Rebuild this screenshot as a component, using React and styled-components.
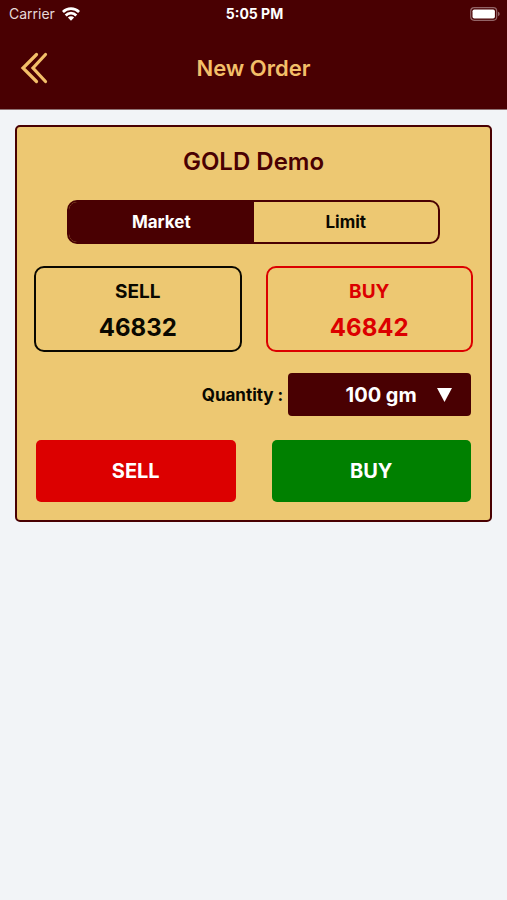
import React, { useState } from 'react';
import styled, { createGlobalStyle } from 'styled-components';

const maroon = '#490002';
const gold = '#edc872';
const red = '#dc0000';

const quantities = ['100 gm', '500 gm', '1 kg'];

function App() {
  const [orderType, setOrderType] = useState('Market');
  const [quantity, setQuantity] = useState('100 gm');

  return (
    <>
      <GlobalStyle />
      <Header>
        <StatusBar>
          <Carrier>
            Carrier
            <WifiIcon />
          </Carrier>
          <Clock>5:05 PM</Clock>
          <Battery>
            <BatteryIcon />
          </Battery>
        </StatusBar>
        <NavBar>
          <BackButton type="button" aria-label="Back">
            <BackIcon />
          </BackButton>
          <Title>New Order</Title>
        </NavBar>
      </Header>
      <Card>
        <Symbol>GOLD Demo</Symbol>
        <Segments>
          {['Market', 'Limit'].map(type => (
            <Segment
              key={type}
              type="button"
              aria-pressed={orderType === type}
              $active={orderType === type}
              onClick={() => setOrderType(type)}
            >
              {type}
            </Segment>
          ))}
        </Segments>
        <Prices>
          <PriceBox $color="#0a0800">
            <PriceLabel>SELL</PriceLabel>
            <Price>46832</Price>
          </PriceBox>
          <PriceBox $color={red}>
            <PriceLabel>BUY</PriceLabel>
            <Price>46842</Price>
          </PriceBox>
        </Prices>
        <QuantityRow>
          <QuantityLabel htmlFor="quantity">Quantity :</QuantityLabel>
          <SelectHolder>
            <Select id="quantity" value={quantity} onChange={e => setQuantity(e.target.value)}>
              {quantities.map(q => <option key={q}>{q}</option>)}
            </Select>
            <Arrow viewBox="0 0 15 14" aria-hidden="true">
              <path d="M0 0h15L7.500 14z" fill="#fff" />
            </Arrow>
          </SelectHolder>
        </QuantityRow>
        <Actions>
          <ActionButton type="button" $color={red}>SELL</ActionButton>
          <ActionButton type="button" $color="#008000">BUY</ActionButton>
        </Actions>
      </Card>
    </>
  );
}

export default App;

const WifiIcon = () => (
  <svg width="18" height="14" viewBox="0 0 18 14" aria-hidden="true">
    <g fill="none" stroke="#fff" strokeWidth="2.800">
      <path d="M0.900 5a11.600 11.600 0 0 1 16.200 0" />
      <path d="M3.700 8.400a7.500 7.500 0 0 1 10.600 0" />
    </g>
    <path d="M5.900 10.500a4.400 4.400 0 0 1 6.200 0L9 13.800z" fill="#fff" />
  </svg>
);

const BatteryIcon = () => (
  <svg width="30" height="14" viewBox="0 0 30 14" aria-hidden="true">
    <rect x="0.700" y="0.700" width="26" height="12.600" rx="3.500" fill="none" stroke="#936467" strokeWidth="1.200" />
    <rect x="2.500" y="2.500" width="22.400" height="9" rx="1.800" fill="#fff" />
    <path d="M28 4.800v4.400c1-.3 1.700-1.200 1.700-2.200S29 5.100 28 4.800z" fill="#936467" />
  </svg>
);

const BackIcon = () => (
  <svg width="28" height="32" viewBox="0 0 28 32" aria-hidden="true">
    <g fill="none" stroke="#f3bf69" strokeWidth="3.200" strokeLinecap="round" strokeLinejoin="miter">
      <path d="M16.500 2.500L3 16L16.500 29.500" />
      <path d="M25.500 2.500L13 16L25.500 29.500" />
    </g>
  </svg>
);

const GlobalStyle = createGlobalStyle`
  * {
    box-sizing: border-box;
  }
  body {
    margin: 0;
    background: #f2f4f7;
    font-family: Inter, "Liberation Sans", sans-serif;
  }
  button, select {
    font-family: inherit;
    cursor: pointer;
  }
`;

const Header = styled.header`
  background: ${maroon};
  border-bottom: 1px solid #8f7273;
`;

const StatusBar = styled.div`
  display: grid;
  grid-template-columns: 1fr auto 1fr;
  align-items: center;
  height: 27px;
  padding: 0 7px 0 9px;
  color: #fff;
  font-size: 14px;
`;

const Carrier = styled.div`
  display: flex;
  align-items: center;
  gap: 7px;
  color: #e6d9d9;
`;

const Clock = styled.div`
  font-weight: 700;
`;

const Battery = styled.div`
  display: flex;
  justify-content: flex-end;
`;

const NavBar = styled.div`
  display: grid;
  grid-template-columns: 1fr auto 1fr;
  align-items: center;
  height: 82px;
  padding: 0 20px;
`;

const BackButton = styled.button`
  display: flex;
  justify-self: start;
  padding: 0;
  border: none;
  background: none;
`;

const Title = styled.h1`
  margin: 0;
  color: #f3bf69;
  font-size: 22px;
  font-weight: 600;
`;

const Card = styled.main`
  margin: 15px;
  padding: 21px 17px 18px;
  border: 2px solid ${maroon};
  border-radius: 5px;
  background: ${gold};
`;

const Symbol = styled.h2`
  margin: 0;
  color: ${maroon};
  font-size: 24px;
  font-weight: 600;
  line-height: 28px;
  text-align: center;
`;

const Segments = styled.div`
  display: flex;
  height: 44px;
  margin: 24px 33px 22px;
  border: 2px solid ${maroon};
  border-radius: 10px;
  overflow: hidden;
`;

const Segment = styled.button`
  flex: 1;
  padding: 0 0 1px;
  border: none;
  background: ${props => props.$active ? maroon : 'transparent'};
  color: ${props => props.$active ? '#fff' : '#0a0800'};
  font-size: 17px;
  font-weight: 700;
`;

const Prices = styled.div`
  display: grid;
  grid-template-columns: 1fr 1fr;
  gap: 24px;
`;

const PriceBox = styled.div`
  padding: 8px 0 2px;
  border: 2px solid ${props => props.$color};
  border-radius: 10px;
  color: ${props => props.$color};
  text-align: center;
`;

const PriceLabel = styled.div`
  font-size: 19px;
  font-weight: 700;
  line-height: 32px;
`;

const Price = styled.div`
  font-size: 24px;
  font-weight: 700;
  line-height: 40px;
`;

const QuantityRow = styled.div`
  display: flex;
  align-items: center;
  justify-content: flex-end;
  gap: 5px;
  margin: 21px 2px 24px;
`;

const QuantityLabel = styled.label`
  color: #0a0800;
  font-size: 17px;
  font-weight: 700;
`;

const SelectHolder = styled.div`
  position: relative;
  width: 42%;
`;

const Select = styled.select`
  display: block;
  appearance: none;
  width: 100%;
  height: 43px;
  padding: 0 0 0 3px;
  border: none;
  border-radius: 4px;
  background: ${maroon};
  color: #fff;
  font-size: 20px;
  font-weight: 700;
  text-align: center;
  text-align-last: center;
`;

const Arrow = styled.svg`
  position: absolute;
  top: 15px;
  right: 19px;
  width: 15px;
  height: 14px;
  pointer-events: none;
`;

const Actions = styled.div`
  display: grid;
  grid-template-columns: 1fr 1fr;
  gap: 36px;
  margin: 0 2px;
`;

const ActionButton = styled.button`
  height: 62px;
  border: none;
  border-radius: 5px;
  background: ${props => props.$color};
  color: #fff;
  font-size: 20px;
  font-weight: 700;
`;
